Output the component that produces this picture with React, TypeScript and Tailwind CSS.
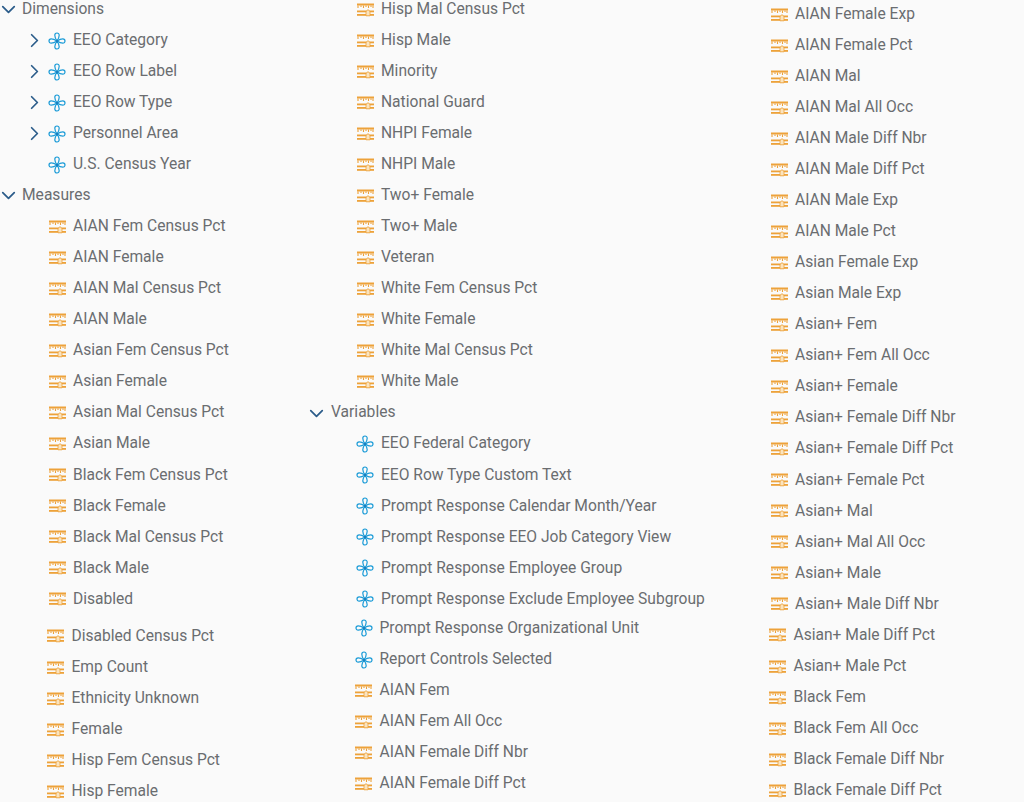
import { ChevronDown, ChevronRight } from "lucide-react";

type Item = { label: string; kind: "dim" | "measure" | "group"; expand?: boolean };

const m = (label: string): Item => ({ label, kind: "measure" });
const d = (label: string, expand = false): Item => ({ label, kind: "dim", expand });
const g = (label: string): Item => ({ label, kind: "group" });

const col1a: Item[] = [
    g("Dimensions"),
    d("EEO Category", true),
    d("EEO Row Label", true),
    d("EEO Row Type", true),
    d("Personnel Area", true),
    d("U.S. Census Year"),
    g("Measures"),
    ...[
        "AIAN Fem Census Pct",
        "AIAN Female",
        "AIAN Mal Census Pct",
        "AIAN Male",
        "Asian Fem Census Pct",
        "Asian Female",
        "Asian Mal Census Pct",
        "Asian Male",
        "Black Fem Census Pct",
        "Black Female",
        "Black Mal Census Pct",
        "Black Male",
        "Disabled",
    ].map(m),
];
const col1b: Item[] = [
    "Disabled Census Pct",
    "Emp Count",
    "Ethnicity Unknown",
    "Female",
    "Hisp Fem Census Pct",
    "Hisp Female",
].map(m);

const col2a: Item[] = [
    ...[
        "Hisp Mal Census Pct",
        "Hisp Male",
        "Minority",
        "National Guard",
        "NHPI Female",
        "NHPI Male",
        "Two+ Female",
        "Two+ Male",
        "Veteran",
        "White Fem Census Pct",
        "White Female",
        "White Mal Census Pct",
        "White Male",
    ].map(m),
    g("Variables"),
    d("EEO Federal Category"),
    d("EEO Row Type Custom Text"),
    d("Prompt Response Calendar Month/Year"),
    d("Prompt Response EEO Job Category View"),
    d("Prompt Response Employee Group"),
    d("Prompt Response Exclude Employee Subgroup"),
];
const col2b: Item[] = [
    d("Prompt Response Organizational Unit"),
    d("Report Controls Selected"),
    m("AIAN Fem"),
    m("AIAN Fem All Occ"),
    m("AIAN Female Diff Nbr"),
    m("AIAN Female Diff Pct"),
];

const col3a: Item[] = [
    "AIAN Female Exp",
    "AIAN Female Pct",
    "AIAN Mal",
    "AIAN Mal All Occ",
    "AIAN Male Diff Nbr",
    "AIAN Male Diff Pct",
    "AIAN Male Exp",
    "AIAN Male Pct",
    "Asian Female Exp",
    "Asian Male Exp",
    "Asian+ Fem",
    "Asian+ Fem All Occ",
    "Asian+ Female",
    "Asian+ Female Diff Nbr",
    "Asian+ Female Diff Pct",
    "Asian+ Female Pct",
    "Asian+ Mal",
    "Asian+ Mal All Occ",
    "Asian+ Male",
    "Asian+ Male Diff Nbr",
].map(m);
const col3b: Item[] = [
    "Asian+ Male Diff Pct",
    "Asian+ Male Pct",
    "Black Fem",
    "Black Fem All Occ",
    "Black Female Diff Nbr",
    "Black Female Diff Pct",
].map(m);

function DimIcon() {
    return (
        <svg width="18" height="18" viewBox="0 0 18 18" fill="none" stroke="#1a9bd7" strokeWidth="1.2" className="shrink-0">
            <path d="M9 9C7.4 6.6 6.8 5.2 6.8 3.2a2.2 2.2 0 0 1 4.4 0C11.2 5.2 10.6 6.6 9 9Z" />
            <path d="M9 9C7.4 11.4 6.8 12.800 6.8 14.800a2.200 2.200 0 0 0 4.400 0C11.200 12.800 10.600 11.400 9 9Z" />
            <path d="M9 9C6.600 7.400 5.200 6.800 3.200 6.800a2.200 2.200 0 0 0 0 4.400C5.200 11.200 6.600 10.600 9 9Z" />
            <path d="M9 9C11.400 7.400 12.800 6.800 14.800 6.800a2.200 2.200 0 0 1 0 4.400C12.800 11.200 11.400 10.600 9 9Z" />
            <circle cx="9" cy="9" r="1.300" fill="#1a7fc0" stroke="none" />
        </svg>
    );
}

function MeasureIcon() {
    return (
        <svg width="17" height="14" viewBox="0 0 17 14" fill="none" className="shrink-0">
            <rect x="0" y="0.500" width="17" height="2" fill="#eda23a" />
            <path d="M1 2.500v2.500M4 2.500v1.500M6.500 2.500v2.500M9 2.500v1.500M11.500 2.500v2.500M14 2.500v1.500M16 2.500v2.500" stroke="#eda23a" strokeWidth="1.100" />
            <rect x="0" y="7.500" width="17" height="1.800" fill="#eda23a" />
            <rect x="0" y="11" width="17" height="1.800" fill="#eda23a" />
            <path d="M11 6.500l2 2.200v4.100H9V8.700Z" fill="#fbe3bd" stroke="#eda23a" strokeWidth="0.800" />
        </svg>
    );
}

function Row({ item, groupGap }: { item: Item; groupGap: string }) {
    if (item.kind === "group") {
        return (
            <div className="flex h-[31.05px] items-center text-[15.6px] text-[#6a6d70]">
                <span className="flex w-[16px] shrink-0 justify-center">
                    <ChevronDown size={23} strokeWidth={1.8} className="shrink-0 text-[#2b5c8a]" />
                </span>
                <span className={groupGap}>{item.label}</span>
            </div>
        );
    }
    return (
        <div className="flex h-[31.05px] items-center text-[15.6px] text-[#6a6d70]">
            <span className="flex w-[48px] shrink-0 justify-end pr-[2px]">
                {item.expand && <ChevronRight size={23} strokeWidth={1.8} className="shrink-0 text-[#2b5c8a]" />}
            </span>
            <span className="flex w-[18px] shrink-0 justify-center">
                {item.kind === "dim" ? <DimIcon /> : <MeasureIcon />}
            </span>
            <span className="ml-[7px] whitespace-nowrap">{item.label}</span>
        </div>
    );
}

function Column({
    first,
    second,
    className,
    secondClass,
    groupGap,
}: {
    first: Item[];
    second: Item[];
    className: string;
    secondClass: string;
    groupGap: string;
}) {
    return (
        <div className={className}>
            <div>
                {first.map((item) => (
                    <Row key={item.label} item={item} groupGap={groupGap} />
                ))}
            </div>
            {/* the capture was stitched here, rows sit a bit off */}
            <div className={secondClass}>
                {second.map((item) => (
                    <Row key={item.label} item={item} groupGap={groupGap} />
                ))}
            </div>
        </div>
    );
}

export default function App() {
    return (
        <div className="flex h-[802px] w-[1024px] overflow-hidden bg-[#fafafa] font-['Roboto','Liberation_Sans',sans-serif]">
            <Column
                first={col1a}
                second={col1b}
                className="-mt-[6px] w-[308px] shrink-0"
                secondClass="mt-[6px] -ml-[1.5px]"
                groupGap="ml-[6px]"
            />
            <Column
                first={col2a}
                second={col2b}
                className="-mt-[6px] w-[414px] shrink-0"
                secondClass="-mt-[2px] -ml-[1.5px]"
                groupGap="ml-[7px]"
            />
            <Column
                first={col3a}
                second={col3b}
                className="-mt-[1px] w-[302px] shrink-0"
                secondClass="-ml-[1.5px]"
                groupGap="ml-[6px]"
            />
        </div>
    );
}
